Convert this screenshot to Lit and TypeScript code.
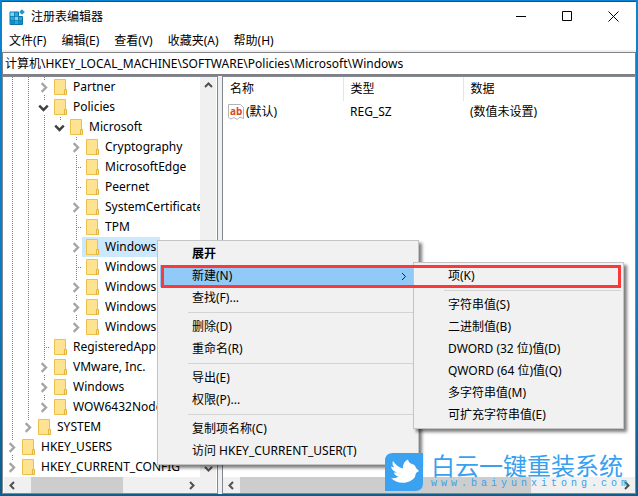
import { LitElement, html, css, svg, nothing } from "lit";
import { customElement, property } from "lit/decorators.js";
import { classMap } from "lit/directives/class-map.js";

type Expander = "open" | "closed" | "none";

interface TreeRow {
  label: string;
  lines: number;
  blanks?: number;
  expander: Expander;
  last?: boolean;
  selected?: boolean;
}

interface MenuEntry {
  label?: string;
  bold?: boolean;
  active?: boolean;
}

const ROWS: TreeRow[] = [
  { label: "Partner", lines: 2, expander: "closed" },
  { label: "Policies", lines: 2, expander: "open" },
  { label: "Microsoft", lines: 3, expander: "open", last: true },
  { label: "Cryptography", lines: 3, blanks: 1, expander: "closed" },
  { label: "MicrosoftEdge", lines: 3, blanks: 1, expander: "none" },
  { label: "Peernet", lines: 3, blanks: 1, expander: "none" },
  { label: "SystemCertificates", lines: 3, blanks: 1, expander: "closed" },
  { label: "TPM", lines: 3, blanks: 1, expander: "none" },
  { label: "Windows", lines: 3, blanks: 1, expander: "closed", selected: true },
  { label: "Windows", lines: 3, blanks: 1, expander: "none" },
  { label: "Windows", lines: 3, blanks: 1, expander: "closed" },
  { label: "Windows", lines: 3, blanks: 1, expander: "closed" },
  { label: "Windows", lines: 3, blanks: 1, expander: "closed", last: true },
  { label: "RegisteredApp", lines: 2, expander: "none" },
  { label: "VMware, Inc.", lines: 2, expander: "closed" },
  { label: "Windows", lines: 2, expander: "closed" },
  { label: "WOW6432Node", lines: 2, expander: "closed", last: true },
  { label: "SYSTEM", lines: 1, expander: "closed", last: true },
  { label: "HKEY_USERS", lines: 0, expander: "closed" },
  { label: "HKEY_CURRENT_CONFIG", lines: 0, expander: "closed", last: true },
];

const CONTEXT_MENU: MenuEntry[] = [
  { label: "展开", bold: true },
  { label: "新建(N)", active: true },
  { label: "查找(F)..." },
  {},
  { label: "删除(D)" },
  { label: "重命名(R)" },
  {},
  { label: "导出(E)" },
  { label: "权限(P)..." },
  {},
  { label: "复制项名称(C)" },
  { label: "访问 HKEY_CURRENT_USER(T)" },
];

const NEW_MENU: MenuEntry[] = [
  { label: "项(K)" },
  {},
  { label: "字符串值(S)" },
  { label: "二进制值(B)" },
  { label: "DWORD (32 位)值(D)" },
  { label: "QWORD (64 位)值(Q)" },
  { label: "多字符串值(M)" },
  { label: "可扩充字符串值(E)" },
];

const ARROWS = {
  up: "M1 6 4.500 2.500 8 6",
  down: "M1 3 4.500 6.500 8 3",
  left: "M6 1 2.500 4.500 6 8",
  right: "M3 1 6.500 4.500 3 8",
};

const arrow = (dir: keyof typeof ARROWS, cls = "") => html`
  <svg class="arrow ${cls}" width="9" height="9" viewBox="0 0 9 9" aria-hidden="true">
    <path d=${ARROWS[dir]} fill="none" stroke="currentColor" />
  </svg>
`;

const reset = css`
  :host,
  * {
    box-sizing: border-box;
  }
  button,
  input {
    font: inherit;
    color: inherit;
    border: 0;
    padding: 0;
    margin: 0;
    background: none;
    border-radius: 0;
  }
  .arrow {
    flex: none;
    stroke-width: 2;
    color: #505050;
  }
`;

@customElement("scroll-strip")
export class ScrollStrip extends LitElement {
  @property({ reflect: true }) axis: "x" | "y" = "x";
  @property({ type: Number }) start = 0;
  @property({ type: Number }) size = 50;

  static styles = [
    reset,
    css`
      :host {
        display: flex;
        background: #f0f0f0;
      }
      :host([axis="x"]) {
        height: 16px;
      }
      :host([axis="y"]) {
        flex-direction: column;
        width: 16px;
      }
      button {
        flex: none;
        width: 17px;
        height: 17px;
        display: grid;
        place-items: center;
      }
      :host([axis="x"]) button {
        height: 16px;
      }
      :host([axis="y"]) button {
        width: 16px;
      }
      .track {
        flex: 1;
        display: flex;
      }
      :host([axis="y"]) .track {
        flex-direction: column;
      }
      .thumb {
        background: #cdcdcd;
      }
    `,
  ];

  render() {
    const x = this.axis === "x";
    return html`
      <button aria-label="向前滚动">${arrow(x ? "left" : "up")}</button>
      <div class="track">
        <div style="flex: ${this.start} 0 0"></div>
        <div class="thumb" style="flex: ${this.size} 0 0"></div>
        <div style="flex: ${100 - this.start - this.size} 0 0"></div>
      </div>
      <button aria-label="向后滚动">${arrow(x ? "right" : "down")}</button>
    `;
  }
}

@customElement("registry-tree")
export class RegistryTree extends LitElement {
  static styles = [
    reset,
    css`
      :host {
        display: block;
        overflow: hidden;
      }
      ul {
        list-style: none;
        margin: 0;
        padding: 0;
      }
      li {
        display: flex;
        height: 20px;
      }
      .guide,
      .node {
        --dots: repeating-linear-gradient(#808080 0 1px, transparent 1px 2px);
        flex: none;
        width: 16px;
        background: var(--dots) 8px 0 / 1px 100% no-repeat;
      }
      .guide.blank {
        background: none;
      }
      .node {
        width: 14px;
        padding: 0 0 0 2px;
        display: grid;
        align-items: center;
      }
      .node.last {
        background-size: 1px 10px;
      }
      .node .arrow {
        width: 11px;
        height: 15px;
        background: #fff;
        color: #a6a6a6;
      }
      .node .arrow.open {
        color: #404040;
      }
      .stub {
        height: 1px;
        margin-left: 6px;
        background: repeating-linear-gradient(90deg, #808080 0 1px, transparent 1px 2px);
      }
      .key {
        flex: none;
        display: flex;
        align-items: center;
        gap: 6px;
        padding: 0 4px;
        white-space: nowrap;
      }
      .key.selected {
        background: #cce8ff;
      }
    `,
  ];

  private folder = svg`
    <svg width="13" height="16" viewBox="0 0 13 16" aria-hidden="true">
      <path d="M.5.5H11.500V15.500H.5Z" fill="#ffe391" stroke="#ecc04a" />
      <path d="M10.500 10.500H12.500V15.500H10.500Z" fill="#ffe391" stroke="#e3b43a" />
    </svg>`;

  render() {
    return html`
      <ul>
        ${ROWS.map(
          (row) => html`
            <li>
              ${Array.from({ length: row.lines }, () => html`<span class="guide"></span>`)}
              ${row.blanks ? html`<span class="guide blank"></span>` : nothing}
              ${row.expander === "none"
                ? html`<span class="node"><span class="stub"></span></span>`
                : html`<button
                    class=${classMap({ node: true, last: !!row.last })}
                    aria-label=${row.expander === "open" ? "折叠" : "展开"}
                  >
                    ${row.expander === "open" ? arrow("down", "open") : arrow("right")}
                  </button>`}
              <button class=${classMap({ key: true, selected: !!row.selected })}>
                ${this.folder}<span>${row.label}</span>
              </button>
            </li>
          `,
        )}
      </ul>
    `;
  }
}

@customElement("popup-menu")
export class PopupMenu extends LitElement {
  @property({ attribute: false }) entries: MenuEntry[] = [];

  static styles = [
    reset,
    css`
      :host {
        display: block;
        padding: 2px;
        background: #f1f1f1;
        border: 1px solid #c4c4c4;
        box-shadow: 3px 3px 3px rgb(0 0 0 / 50%);
      }
      button {
        display: flex;
        align-items: center;
        justify-content: space-between;
        width: 100%;
        height: 22px;
        padding: 0 8px 0 32px;
        text-align: left;
        white-space: nowrap;
      }
      .bold {
        font-weight: 700;
      }
      .active {
        background: #91c9f7;
      }
      .active .arrow {
        stroke-width: 1;
        color: #222;
      }
      hr {
        height: 1px;
        border: 0;
        margin: 3px 0 3px 28px;
        background: #d4d4d4;
      }
    `,
  ];

  render() {
    return this.entries.map((e) =>
      e.label
        ? html`<button role="menuitem" class=${classMap({ bold: !!e.bold, active: !!e.active })}>
            ${e.label}${e.active ? arrow("right") : nothing}
          </button>`
        : html`<hr />`,
    );
  }
}

@customElement("app-root")
export class AppRoot extends LitElement {
  static styles = [
    reset,
    css`
      :host {
        display: flex;
        position: relative;
        min-height: 100vh;
        padding: 1px 2px 2px;
        overflow: hidden;
        background: linear-gradient(#0a84d0, #0a7cc4 60%, #0b5f8c);
        color: #000;
        font: 12px/20px "Noto Sans", "Noto Sans CJK SC", sans-serif;
      }
      .window {
        flex: 1;
        min-width: 0;
        display: flex;
        flex-direction: column;
        background: #fff;
        border-top: 1px solid #17537a;
      }
      .title {
        display: flex;
        align-items: center;
        height: 29px;
        padding-left: 7px;
      }
      h1 {
        flex: 1;
        margin: 0 0 0 6px;
        font-size: 12px;
        font-weight: 400;
      }
      .caption {
        width: 46px;
        height: 28px;
        display: grid;
        place-items: center;
      }
      nav {
        display: flex;
        gap: 15px;
        padding: 0 7px;
        height: 21px;
        border-bottom: 2px solid #f0f0f0;
      }
      .address {
        width: 100%;
        height: 24px;
        padding: 0 2px 1px;
        border: solid #828087;
        border-width: 1px 1px 2px;
        outline: 0;
      }
      .panes {
        flex: 1;
        display: grid;
        grid-template-columns: 216px minmax(0, 1fr);
        gap: 4px;
        background: #f0f0f0;
      }
      .pane {
        background: #fff;
        border: 1px solid #828790;
        min-width: 0;
      }
      .left {
        display: grid;
        grid-template: minmax(0, 1fr) 16px / minmax(0, 1fr) 16px;
        padding: 0 1px;
      }
      .corner {
        background: #f0f0f0;
      }
      .right {
        display: flex;
        flex-direction: column;
        justify-content: space-between;
      }
      table {
        width: 100%;
        table-layout: fixed;
        border-collapse: collapse;
        text-align: left;
      }
      th,
      td {
        font-weight: 400;
        padding: 0 7px;
        height: 24px;
      }
      td {
        height: 22px;
      }
      th + th {
        border-left: 1px solid #e5e5e5;
      }
      .name {
        width: 120px;
      }
      .type {
        width: 120px;
      }
      .value {
        display: flex;
        align-items: center;
        gap: 2px;
        margin-left: -2px;
      }
      .context {
        position: absolute;
        left: 157px;
        top: 240px;
        width: 262px;
      }
      .submenu {
        position: absolute;
        left: 413px;
        top: 262px;
        width: 211px;
      }
      .marker {
        position: absolute;
        left: 161px;
        top: 265px;
        width: 460px;
        height: 23px;
        border: 3px solid #fa3a3a;
        pointer-events: none;
      }
      .watermark {
        position: absolute;
        left: 385px;
        top: 453px;
        display: flex;
        gap: 8px;
        color: #38a1ef;
        white-space: nowrap;
        pointer-events: none;
      }
      .brand {
        font-size: 24px;
        line-height: 25px;
      }
      .site {
        font: 10px/12px "Liberation Mono", monospace;
        letter-spacing: 4px;
      }
    `,
  ];

  render() {
    return html`
      <div class="window">
        <header class="title">
          <svg width="16" height="16" viewBox="0 0 16 16" aria-hidden="true">
            <path d="M1 3H9.500V7.500H13.500V15.500H1Z" fill="#2ba9de" stroke="#0b76ad" />
            <path d="M5.500 7.500H9V11.500H5.500ZM1.500 3.500H5V7H1.500Z" fill="#7fd3f2" />
            <path d="M1.500 12H5V15H1.500ZM10 12H13V15H10Z" fill="#168dc8" />
            <path d="M1 7.500H9.500M1 11.500H13.500M5.500 3V15.500M9.500 7.500V15.500" fill="none" stroke="#0b76ad" stroke-width=".7" />
            <path d="M13 .2 15.800 3 13 5.800 10.200 3Z" fill="#2595cc" />
          </svg>
          <h1>注册表编辑器</h1>
          <button class="caption" aria-label="最小化">
            <svg width="11" height="11"><path d="M0 5.500H10" stroke="#000" /></svg>
          </button>
          <button class="caption" aria-label="最大化">
            <svg width="11" height="11"><path d="M.5.5H9.500V9.500H.5Z" fill="none" stroke="#000" /></svg>
          </button>
          <button class="caption" aria-label="关闭">
            <svg width="11" height="11"><path d="M.5.5 10.500 10.500M10.500.5.5 10.500" stroke="#000" /></svg>
          </button>
        </header>
        <nav>
          ${["文件(F)", "编辑(E)", "查看(V)", "收藏夹(A)", "帮助(H)"].map(
            (m) => html`<button>${m}</button>`,
          )}
        </nav>
        <input
          class="address"
          aria-label="地址"
          .value=${"计算机\\HKEY_LOCAL_MACHINE\\SOFTWARE\\Policies\\Microsoft\\Windows"}
        />
        <main class="panes">
          <section class="pane left">
            <registry-tree></registry-tree>
            <scroll-strip axis="y" .start=${50} .size=${20}></scroll-strip>
            <scroll-strip axis="x" .start=${6} .size=${57}></scroll-strip>
            <div class="corner"></div>
          </section>
          <section class="pane right">
            <table>
              <thead>
                <tr>
                  <th class="name">名称</th>
                  <th class="type">类型</th>
                  <th>数据</th>
                </tr>
              </thead>
              <tbody>
                <tr>
                  <td>
                    <span class="value">
                      <svg width="16" height="16" viewBox="0 0 16 16" aria-hidden="true">
                        <path d="M.5 .5H12.500L15.500 3.500V14.500L12 13 9 15.500 6 13.500 3 15 .5 13.500Z" fill="#fff" stroke="#b4b4b4" />
                        <text x="2" y="11" font-size="10" font-weight="700" fill="#d9472b">ab</text>
                      </svg>
                      (默认)
                    </span>
                  </td>
                  <td>REG_SZ</td>
                  <td>(数值未设置)</td>
                </tr>
              </tbody>
            </table>
            <scroll-strip axis="x" .start=${0} .size=${77}></scroll-strip>
          </section>
        </main>
      </div>
      <popup-menu class="context" role="menu" .entries=${CONTEXT_MENU}></popup-menu>
      <popup-menu class="submenu" role="menu" .entries=${NEW_MENU}></popup-menu>
      <div class="marker"></div>
      <div class="watermark">
        <svg width="38" height="38" viewBox="0 0 38 38" aria-hidden="true">
          <path d="M8 0H38V30Q38 38 30 38H0V8Q0 0 8 0Z" fill="#3aa2f0" />
          <path
            d="M8 8Q12 14 18 15.500Q17.500 9 23 6.500Q23.500 9.500 27 11Q30 11.500 31 15L34 18 31 20Q30 28 21 29.500Q12 31 6 25Q11 26 13.500 23.500Q9.500 22.500 9 19.500L12 19.500Q7 18 6 13.500L9.500 14.500Q6.500 11.500 8 8Z"
            fill="#fff"
          />
        </svg>
        <div>
          <div class="brand">白云一键重装系统</div>
          <div class="site">www.baiyunxitong.com</div>
        </div>
      </div>
    `;
  }
}
